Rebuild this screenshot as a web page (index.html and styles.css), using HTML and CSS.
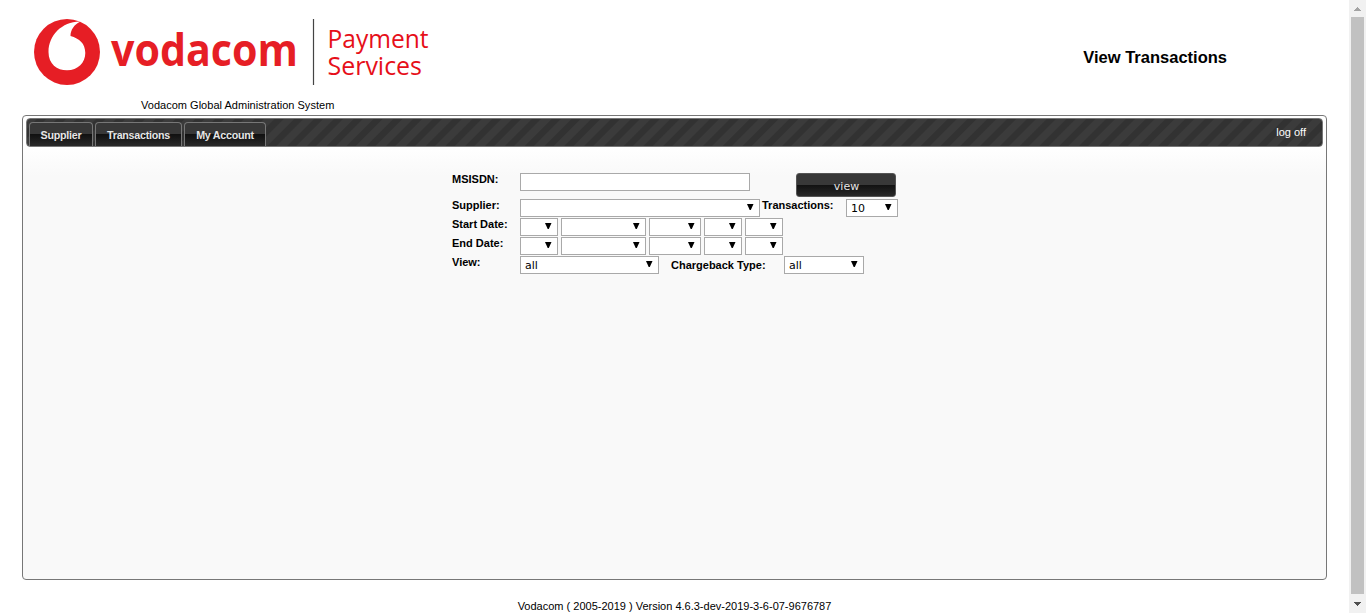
FILE: index.html
```html
<!DOCTYPE html>
<html lang="en">
<head>
<meta charset="utf-8">
<title>View Transactions</title>
<link rel="stylesheet" href="styles.css">
</head>
<body>
<div class="page">
  <header class="header">
    <div class="brand">
      <svg class="logo" width="410" height="76" viewBox="0 0 410 76" role="img" aria-label="Vodacom Payment Services">
        <circle cx="45" cy="42" r="33" fill="#e61e25"/>
        <path d="M57.500 11.500C40 12 26.500 25 26.500 42C26.500 54 35 60.300 45 60.300C56 60.300 63.300 52.500 63.300 43C63.300 33.500 57.500 28.500 48.500 26C48.500 20 52 14.500 58.500 11.500Z" fill="#fff"/>
        <text class="logo-name" x="89" y="56" textLength="187" lengthAdjust="spacingAndGlyphs">vodacom</text>
        <path d="M291.500 9V75" stroke="#444" stroke-width="1.200"/>
        <text class="logo-unit" x="305.500" y="38" textLength="101" lengthAdjust="spacingAndGlyphs">Payment</text>
        <text class="logo-unit" x="305.500" y="65" textLength="94.500" lengthAdjust="spacingAndGlyphs">Services</text>
      </svg>
      <div class="system-name">Vodacom Global Administration System</div>
    </div>
    <h1 class="title">View Transactions</h1>
  </header>
  <main class="panel">
    <nav class="navbar">
      <div class="tabs"><a class="tab tab-supplier">Supplier</a><a class="tab tab-transactions">Transactions</a><a class="tab tab-account">My Account</a></div>
      <a class="logoff">log off</a>
    </nav>
    <form class="filters">
      <div class="row row-msisdn"><label class="label">MSISDN:</label><div class="field w230"></div><button type="button" class="view-button">view</button></div>
      <div class="row row-supplier"><label class="label">Supplier:</label><div class="field w240"><i class="arrow"></i></div><label class="label-count">Transactions:</label><div class="field w52">10<i class="arrow"></i></div></div>
      <div class="row"><label class="label">Start Date:</label><div class="dates"><div class="field w38"><i class="arrow"></i></div><div class="field w85"><i class="arrow"></i></div><div class="field w52"><i class="arrow"></i></div><div class="field w38"><i class="arrow"></i></div><div class="field w38"><i class="arrow"></i></div></div></div>
      <div class="row"><label class="label">End Date:</label><div class="dates"><div class="field w38"><i class="arrow"></i></div><div class="field w85"><i class="arrow"></i></div><div class="field w52"><i class="arrow"></i></div><div class="field w38"><i class="arrow"></i></div><div class="field w38"><i class="arrow"></i></div></div></div>
      <div class="row"><label class="label">View:</label><div class="field w139">all<i class="arrow"></i></div><label class="label-type">Chargeback Type:</label><div class="field w80">all<i class="arrow"></i></div></div>
    </form>
  </main>
  <footer class="footer">Vodacom ( 2005-2019 ) Version 4.6.3-dev-2019-3-6-07-9676787</footer>
</div>
<div class="scrollbar">
  <svg width="17" height="17" shape-rendering="crispEdges"><path d="M8 7h1v1h1v1h1v1h1v1H5v-1h1V9h1V8h1z" fill="#a3a3a3"/></svg>
  <div class="thumb"></div>
  <svg width="17" height="19" shape-rendering="crispEdges"><path d="M5 8h7v1h-1v1h-1v1H9v1H8v-1H7v-1H6V9H5z" fill="#505050"/></svg>
</div>
</body>
</html>
```
FILE: styles.css
```css
* { box-sizing: border-box; }
body {
  margin: 0;
  height: 613px;
  display: flex;
  overflow: hidden;
  background: #fff;
  color: #000;
  font: 11px "Liberation Sans", Arial, sans-serif;
}
.page { width: 1349px; padding: 0 22px; }
.header { height: 115px; display: flex; justify-content: space-between; padding-top: 10px; }
.logo { display: block; overflow: visible; }
.logo-name { font: 700 44px "Open Sans", sans-serif; fill: #e61e25; }
.logo-unit { font: 400 26px "Open Sans", sans-serif; fill: #e60f19; }
.system-name { margin: 13px 0 0 119px; line-height: 13px; letter-spacing: 0.020px; }
.title { margin: 37px 100px 0 0; font-size: 16.500px; line-height: 20px; }
.panel {
  height: 465px;
  padding: 2px 3px 0;
  border: 1px solid #777;
  border-radius: 4px;
  background: linear-gradient(#fff 30px, #f9f9f9 60px);
}
.navbar {
  height: 29px;
  display: flex;
  justify-content: space-between;
  padding: 3px 16px 0 2px;
  border: 1px solid #777;
  border-radius: 4px;
  background: repeating-linear-gradient(135deg, #3b3b3b 0 6.500px, #323232 7.500px 13px, #3b3b3b 14px);
}
.tabs { display: flex; gap: 2px; }
.tab {
  height: 24px;
  border: 1px solid #777;
  border-bottom: 0;
  border-radius: 4px 4px 0 0;
  background: linear-gradient(#383838 50%, #111 50%, #292929);
  color: #e6e6e6;
  font-size: 10.700px;
  font-weight: 700;
  line-height: 24px;
  text-align: center;
  letter-spacing: -0.250px;
}
.tab-supplier { width: 64px; }
.tab-transactions { width: 87px; }
.tab-account { width: 82px; }
.logoff { color: #fff; line-height: 21px; }
.filters { width: 480px; margin: 26px 0 0 425px; display: flex; flex-direction: column; gap: 1px; }
.row { height: 18px; display: flex; align-items: flex-start; }
.row-msisdn { height: 24px; }
.row-supplier { height: 19px; padding-top: 1px; }
.label { width: 69px; flex: none; padding-left: 1px; font-weight: 700; line-height: 13px; }
.field {
  height: 18px;
  flex: none;
  display: flex;
  justify-content: space-between;
  padding: 0 5px 0 4px;
  border: 1px solid #a9a9a9;
  background: #fff;
  font: 11px/18px "DejaVu Sans", Verdana, sans-serif;
}
.w38 { width: 38px; } .w52 { width: 52px; } .w80 { width: 80px; } .w85 { width: 85px; }
.w139 { width: 139px; } .w230 { width: 230px; } .w240 { width: 240px; }
.arrow { width: 7px; height: 6px; margin: 4px 0 0 auto; background: #000; clip-path: polygon(0 0, 93% 0, 54% 100%, 39% 100%); }
.dates { display: flex; gap: 3px; }
.view-button {
  width: 100px;
  height: 24px;
  margin-left: 46px;
  padding: 2px 0 0 1px;
  border: 1px solid #555;
  border-radius: 3px;
  background: linear-gradient(#383838 50%, #111 50%, #292929);
  color: #e6e6e6;
  font: 11px "DejaVu Sans", Verdana, sans-serif;
}
.label-count { width: 84px; margin-right: 2px; padding-left: 2px; font-weight: 700; line-height: 13px; }
.label-type { width: 125px; padding: 3px 0 0 12px; font-weight: 700; line-height: 13px; }
.footer { margin-top: 20px; text-align: center; line-height: 13px; }
.scrollbar { width: 17px; height: 613px; display: flex; flex-direction: column; background: #f1f1f1; }
.scrollbar svg { display: block; flex: none; }
.thumb { flex: 1; margin: 0 2px; background: #c1c1c1; }
```
